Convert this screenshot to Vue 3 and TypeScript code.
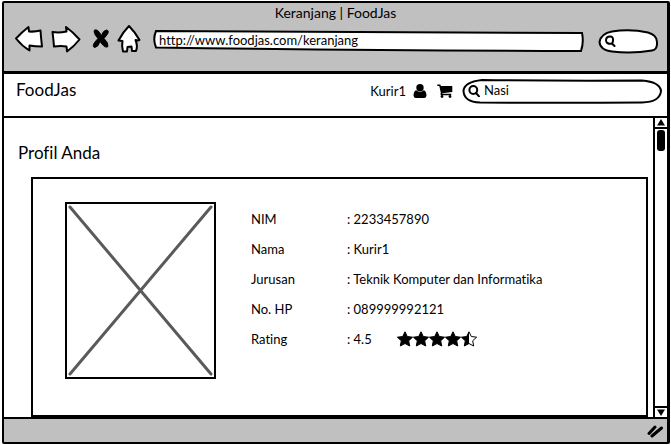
<script setup lang="ts">
import { ref } from 'vue'

interface Field {
  label: string
  value: string
  stars?: number
}

const url = ref('http://www.foodjas.com/keranjang')
const webQuery = ref('')
const query = ref('Nasi')

const fields: Field[] = [
  { label: 'NIM', value: '2233457890' },
  { label: 'Nama', value: 'Kurir1' },
  { label: 'Jurusan', value: 'Teknik Komputer dan Informatika' },
  { label: 'No. HP', value: '089999992121' },
  { label: 'Rating', value: '4.5', stars: 4.5 },
]

const starPath = 'M8 .8 10.3 5.5 15.6 6.2 11.7 9.8 12.7 15 8 12.5 3.3 15 4.3 9.8 .4 6.2 5.7 5.5Z'
</script>

<template>
  <div class="window">
    <header class="chrome">
      <div class="title">Keranjang | FoodJas</div>
      <div class="tools">
        <div class="nav">
          <button type="button" aria-label="Back">
            <svg width="30" height="28" viewBox="0 0 30 28"><path d="M2 13.500Q8 7 14.500 2L15 6.500Q21 7 26.500 5.500 27 13 28 21.500 21 21.500 15.500 20.500L15.500 25.500Q8 21 2 13.500Z" /></svg>
          </button>
          <button type="button" aria-label="Forward">
            <svg width="30" height="28" viewBox="0 0 30 28"><path d="M1.500 7Q8 8 15.500 6.500L15 2Q22 7 28.500 14.500 23 21.500 16 26.500L15.500 21.500Q10 20.500 3 21.500 2.500 15 1.500 7Z" /></svg>
          </button>
          <button type="button" aria-label="Stop" class="stop">
            <svg width="18" height="22" viewBox="0 0 18 22"><path class="solid" d="M2.500 2Q5.500 1 7.500 4.500L9.500 7.500Q11 2.500 14.500 2 17.500 2.500 15.500 6L12 10.500Q16.500 15 16 18.500 13.500 20.500 10 16L8 13.500Q6 19.500 2.500 19.500 0 18.500 2.500 14.500L6 10.500Q1 5 2.500 2Z" /></svg>
          </button>
          <button type="button" aria-label="Home">
            <svg width="24" height="30" viewBox="0 0 24 30"><path d="M12 2Q18 8 22.500 16 21 17 18.500 16 21 22 19 27L15 27 14.500 22.500 10.500 23 10 27.500 6 27.500Q4.500 22 5.500 17L1.500 16.500Q6 8 12 2Z" /></svg>
          </button>
        </div>
        <label class="field address">
          <svg class="outline" viewBox="0 0 430 24" preserveAspectRatio="none" aria-hidden="true"><path d="M3 2Q200 2.500 428 4 430 13 427 22 200 21.500 3 18.500-.5 10 3 2Z" /></svg>
          <input v-model="url" type="text" aria-label="Address" />
        </label>
        <label class="field web-search">
          <svg class="outline" viewBox="0 0 60 26" preserveAspectRatio="none" aria-hidden="true"><path d="M14 3.500Q32 .5 50 4.500 59 7 59 14 59.500 22 54 22.500 34 26 14 23.500 2 22 1.500 14 3 5.500 14 3.500Z" /></svg>
          <svg class="lens" width="12" height="12" viewBox="0 0 12 12" aria-hidden="true"><path d="M8 8.500Q2.500 9.500 2 5.500 2 1.500 6 1.500 9.500 1.500 9 5.500 9 7 8 8.500L10.500 11" /></svg>
          <input v-model="webQuery" type="text" aria-label="Web search" />
        </label>
      </div>
    </header>

    <div class="site-bar">
      <a class="brand" href="#">FoodJas</a>
      <div class="account">
        <a class="user" href="#">Kurir1
          <svg width="14" height="14" viewBox="0 0 14 14" aria-hidden="true"><ellipse cx="7" cy="3.700" rx="3.700" ry="3.700" /><path d="M3.200 6.300Q7 9.600 10.800 6.300 13.300 7 13.500 11.500 13.300 14 11 14H3Q.7 14 .5 11.500 .7 7 3.200 6.300Z" /></svg>
        </a>
        <a class="cart" href="#" aria-label="Cart">
          <svg width="16" height="14" viewBox="0 0 16 14"><path d="M.3 .6H3.300L3.900 2H15.300V8L5.300 9.200 5.100 9.800H14.200V11.200H4Q3 11 3.800 8.700L2.300 2.100H.3Z" /><circle cx="5" cy="12.500" r="1.400" /><circle cx="13" cy="12.500" r="1.400" /></svg>
        </a>
      </div>
      <label class="field site-search">
        <svg class="outline" viewBox="0 0 200 26" preserveAspectRatio="none" aria-hidden="true"><path d="M20 2Q100 3 180 2.500 198 4 199 13 198 24 180 24.500 100 25 18 24.500 2 24 1.500 13 2 4 20 2Z" /></svg>
        <svg class="lens" width="12" height="12" viewBox="0 0 12 12" aria-hidden="true"><circle cx="5.300" cy="5" r="3.900" /><path d="M8 8 11 11.300" /></svg>
        <input v-model="query" type="text" aria-label="Search food" />
      </label>
    </div>

    <div class="viewport">
      <main>
        <h1>Profil Anda</h1>
        <section class="card">
          <svg class="photo" viewBox="0 0 151 177" role="img" aria-label="Profile photo">
            <path class="cross" d="M5 5 146 172M146 5 5 172" />
            <rect x="1" y="1" width="149" height="175" />
          </svg>
          <dl>
            <div v-for="f in fields" :key="f.label" class="row">
              <dt>{{ f.label }}</dt>
              <dd>
                <span>: {{ f.value }}</span>
                <span v-if="f.stars" class="stars">
                  <svg v-for="n in 5" :key="n" width="16" height="16" viewBox="0 0 16 16" aria-hidden="true">
                    <path v-if="n <= f.stars" class="full" :d="starPath" />
                    <template v-else>
                      <path class="hollow" :d="starPath" />
                      <path d="M8 .8V12.500L3.300 15 4.300 9.800 .4 6.200 5.700 5.500Z" />
                    </template>
                  </svg>
                </span>
              </dd>
            </div>
          </dl>
        </section>
      </main>
      <div class="scrollbar">
        <button type="button" aria-label="Scroll up">
          <svg width="8" height="7" viewBox="0 0 8 7"><path d="M4 0 8 6.500H0Z" /></svg>
        </button>
        <div class="track"><div class="thumb"></div></div>
        <button type="button" aria-label="Scroll down">
          <svg width="8" height="7" viewBox="0 0 8 7"><path d="M0 .5H8L4 7Z" /></svg>
        </button>
      </div>
    </div>

    <footer>
      <svg width="18" height="14" viewBox="0 0 18 14" aria-hidden="true"><path d="M3 9.500 9 3M6 12 15.500 4" /></svg>
    </footer>
  </div>
</template>

<style>
body {
  margin: 0;
  background: #fff;
}
</style>

<style scoped>
* {
  box-sizing: border-box;
}

.window {
  display: flex;
  flex-direction: column;
  min-height: calc(100vh - 2px);
  margin: 1px 1px 1px 2px;
  border: 2px solid #000;
  border-right-width: 3px;
  border-radius: 2px;
  background: #fff;
  color: #000;
  font: 13px/20px Lato, "Balsamiq Sans", sans-serif;
  font-variant-ligatures: none;
}

button {
  display: flex;
  align-items: center;
  justify-content: center;
  padding: 0;
  border: 0;
  background: none;
}

a {
  color: inherit;
  text-decoration: none;
}

svg {
  display: block;
  flex: none;
}

.chrome {
  height: 71px;
  border-bottom: 3px solid #000;
  background: #c0c0c0;
}

.title {
  font-size: 14px;
  text-align: center;
}

.tools {
  display: flex;
  align-items: center;
  height: 28px;
  margin-top: 2px;
  padding: 0 9px 0 10px;
}

.nav {
  display: flex;
  align-items: center;
  gap: 7px;
  margin-right: 12px;
}

.nav path {
  fill: #fff;
  stroke: #000;
  stroke-width: 2;
  stroke-linejoin: round;
}

.nav .stop {
  margin-left: 4px;
}

.nav path.solid {
  fill: #000;
  stroke-width: 1;
}

.field {
  display: grid;
  align-items: center;
  min-width: 0;
}

.field > * {
  grid-area: 1 / 1;
}

.outline {
  width: 100%;
  height: 100%;
  min-width: 0;
  min-height: 0;
  fill: #fff;
  stroke: #000;
  stroke-width: 2;
}

.outline path,
.lens path,
.lens circle {
  vector-effect: non-scaling-stroke;
}

.lens {
  margin-left: 6px;
  fill: none;
  stroke: #000;
  stroke-width: 2;
  stroke-linecap: round;
}

input {
  width: 100%;
  min-width: 0;
  padding: 0;
  border: 0;
  outline: 0;
  background: none;
  color: inherit;
  font: inherit;
  font-variant-ligatures: none;
}

.address {
  flex: 1;
  height: 24px;
  margin-top: 4px;
}

.address input {
  padding: 0 6px 2px;
}

.web-search {
  width: 60px;
  height: 26px;
  margin: 4px 0 0 14px;
}

.web-search input {
  padding: 0 8px 0 20px;
}

.site-bar {
  display: flex;
  align-items: center;
  height: 44px;
  padding: 0 5px 8px 12px;
  border-bottom: 2px solid #000;
}

.brand,
h1 {
  margin: 0;
  font-size: 17px;
  font-weight: 400;
}

.brand {
  padding-bottom: 2px;
}

.account {
  display: flex;
  align-items: center;
  gap: 10px;
  margin: 0 9px 0 auto;
}

.user {
  display: flex;
  align-items: center;
  gap: 7px;
}

.site-search {
  width: 200px;
  height: 26px;
}

.site-search input {
  padding: 0 16px 2px 22px;
}

.viewport {
  display: flex;
  flex: 1;
}

main {
  display: flex;
  flex: 1;
  flex-direction: column;
  min-width: 0;
  padding: 25px 5px 0 14px;
}

.card {
  display: flex;
  flex: 1;
  align-items: flex-start;
  gap: 35px;
  margin: 14px 0 0 13px;
  padding: 23px 32px;
  border: 2px solid #000;
}

.photo {
  width: 151px;
  height: 177px;
  fill: none;
  stroke: #000;
  stroke-width: 2;
}

.photo .cross {
  stroke: #5a5a5a;
  stroke-width: 3;
  stroke-linecap: round;
}

dl {
  flex: 1;
  min-width: 0;
  margin: 2px 0 0;
}

.row {
  display: grid;
  grid-template-columns: 96px 1fr;
  align-items: center;
  height: 30px;
}

dd {
  display: flex;
  align-items: center;
  gap: 25px;
  margin: 0;
}

.stars {
  display: flex;
}

.full {
  stroke: #000;
  stroke-width: 1;
  stroke-linejoin: round;
}

.hollow {
  fill: #fff;
  stroke: #000;
}

.scrollbar {
  display: flex;
  flex-direction: column;
  width: 14px;
  border-left: 2px solid #000;
}

.scrollbar button {
  height: 9px;
}

.track {
  flex: 1;
  border: solid #000;
  border-width: 2px 0;
}

.thumb {
  width: 8px;
  height: 21px;
  margin: 1px auto 0;
  border-radius: 3px;
  background: #000;
}

footer {
  display: flex;
  align-items: center;
  justify-content: flex-end;
  height: 25px;
  padding-right: 3px;
  border-top: 2px solid #000;
  background: #c0c0c0;
}

footer path {
  fill: none;
  stroke: #000;
  stroke-width: 3;
  stroke-linecap: round;
}
</style>
